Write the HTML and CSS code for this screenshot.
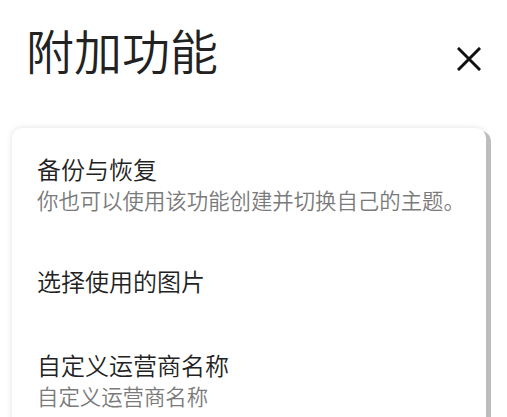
FILE: index.html
```html
<!DOCTYPE html>
<html lang="zh-CN">
<head>
<meta charset="utf-8">
<link rel="stylesheet" href="styles.css">
</head>
<body>
<div class="page">
  <header class="header">
    <h1 class="title">附加功能</h1>
    <button class="close" aria-label="关闭">
      <svg width="24" height="24" viewBox="0 0 24 24"><path d="M2 2L22 22M22 2L2 22" stroke="#111" stroke-width="3" stroke-linecap="square"/></svg>
    </button>
  </header>
  <div class="card">
    <div class="item">
      <div class="item-title">备份与恢复</div>
      <div class="item-sub">你也可以使用该功能创建并切换自己的主题。</div>
    </div>
    <div class="item single">
      <div class="item-title">选择使用的图片</div>
    </div>
    <div class="item">
      <div class="item-title">自定义运营商名称</div>
      <div class="item-sub">自定义运营商名称</div>
    </div>
  </div>
</div>
</body>
</html>
```
FILE: styles.css
```css
html, body {
  margin: 0;
  padding: 0;
  background: #ffffff;
  overflow: hidden;
}
body {
  font-family: "Noto Sans CJK SC", "Noto Sans", sans-serif;
  width: 507px;
  height: 417px;
}
.page {
  display: flex;
  flex-direction: column;
}
.header {
  display: flex;
  align-items: flex-start;
  justify-content: space-between;
  padding: 15px 26px 0 26px;
  height: 83px;
}
.title {
  margin: 0;
  font-size: 48px;
  font-weight: 350;
  line-height: 68px;
  color: #222222;
}
.close {
  border: 0;
  background: none;
  padding: 0;
  margin-top: 32px;
  width: 24px;
  height: 24px;
  display: flex;
}
.card {
  margin: 30px 21px 0 12px;
  background: #ffffff;
  border-radius: 10px;
  box-shadow: 5px 3px 0 #bdbdbd, 0 0 6px rgba(0, 0, 0, 0.12);
  height: 400px;
  display: flex;
  flex-direction: column;
}
.item {
  padding: 23px 8px 27px 25px;
  display: flex;
  flex-direction: column;
}
.item.single {
  padding-top: 23px;
  padding-bottom: 25px;
}
.item-title {
  font-size: 24px;
  line-height: 36px;
  font-weight: 350;
  color: #222222;
}
.item-sub {
  font-size: 21.4px;
  line-height: 26px;
  font-weight: 350;
  color: #7a7a7a;
  white-space: nowrap;
}
```
